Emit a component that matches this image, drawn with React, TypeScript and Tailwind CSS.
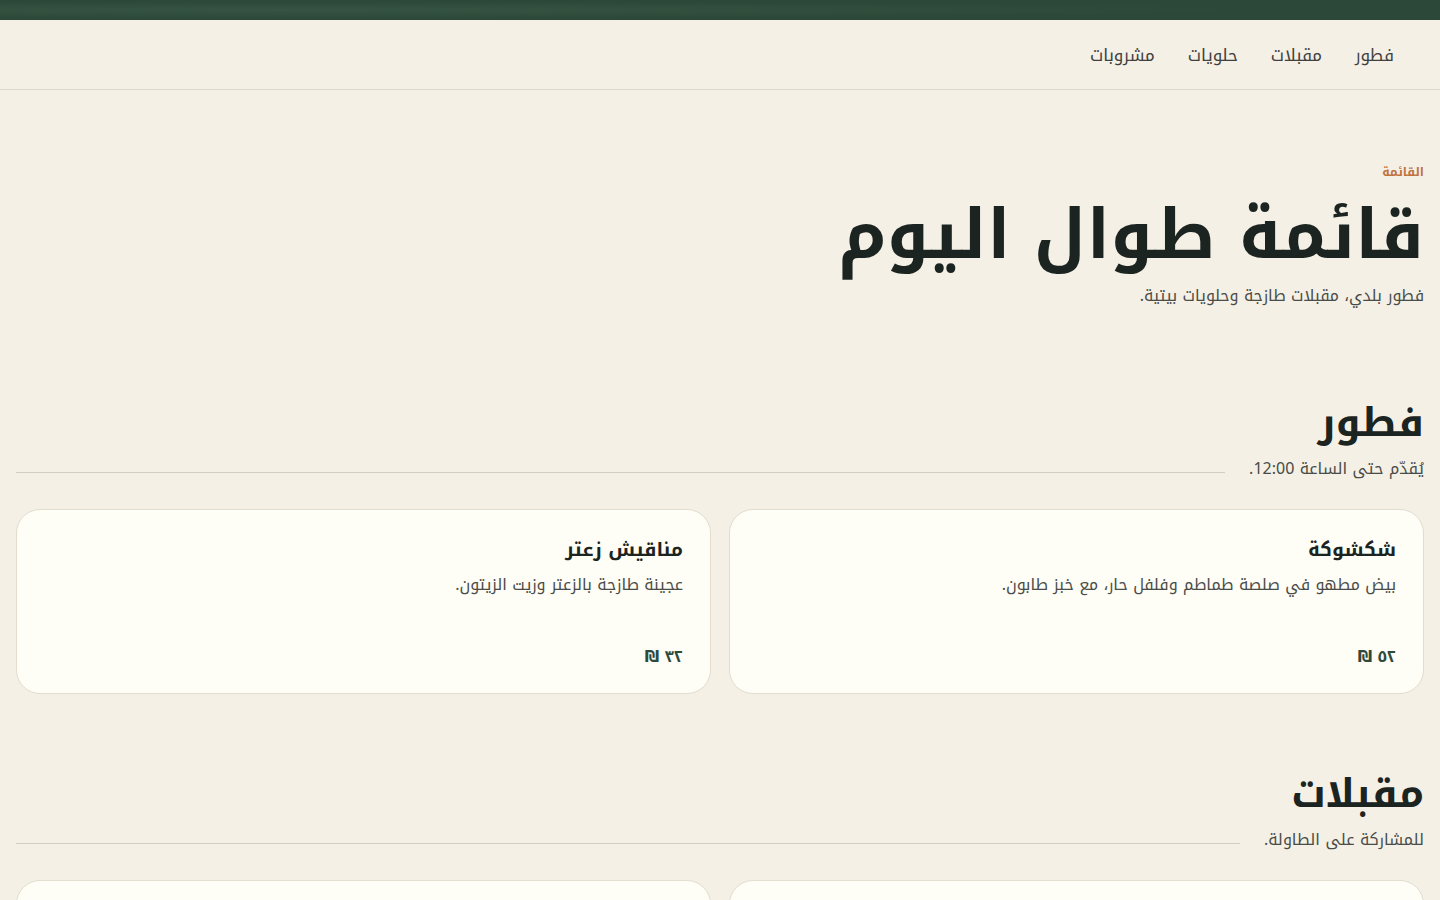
import React from "react";

const FONT = '"Noto Kufi Arabic", "Noto Sans Arabic", "DejaVu Sans", sans-serif';

type Item = { name: string; desc: string; price: string };
type Section = { title: string; sub: string; items: Item[] };

const sections: Section[] = [
  {
    title: "فطور",
    sub: "يُقدّم حتى الساعة 12:00.",
    items: [
      { name: "شكشوكة", desc: "بيض مطهو في صلصة طماطم وفلفل حار، مع خبز طابون.", price: "٥٢ ₪" },
      { name: "مناقيش زعتر", desc: "عجينة طازجة بالزعتر وزيت الزيتون.", price: "٣٢ ₪" },
    ],
  },
  {
    title: "مقبلات",
    sub: "للمشاركة على الطاولة.",
    items: [
      { name: "حمص", desc: "حمص ناعم مع طحينة وزيت زيتون.", price: "٢٨ ₪" },
      { name: "متبل", desc: "باذنجان مشوي مع طحينة وليمون.", price: "٣٠ ₪" },
    ],
  },
];

function Card({ item }: { item: Item }) {
  return (
    <div className="flex h-[185px] flex-col rounded-[24px] border border-[#e3ddcf] bg-[#fefdf6] px-[27px] pt-[25px] pb-[24px]">
      <h3 className="text-[19px] font-bold leading-[30px] text-[#1b2420]">{item.name}</h3>
      <p className="mt-[6px] text-[16px] leading-[28px] text-[#4a4c48]">{item.desc}</p>
      <div className="mt-auto text-[16px] font-bold leading-[24px] text-[#2e4a3b]">{item.price}</div>
    </div>
  );
}

export default function App() {
  return (
    <div dir="rtl" className="min-h-screen bg-[#f4f0e6]" style={{ fontFamily: FONT }}>
      <div className="h-5 bg-[#2c4838] bg-[radial-gradient(ellipse_at_20%_50%,#365443_0%,#2c4838_60%)]" />
      <header className="flex h-[70px] items-center border-b border-[#ddd7ca] pr-[46px]">
        <nav className="flex gap-[33px] pt-[2px] text-[17px] text-[#3f4140]">
          <a>فطور</a>
          <a>مقبلات</a>
          <a>حلويات</a>
          <a>مشروبات</a>
        </nav>
      </header>
      <main className="px-4">
        <section className="pt-[74px]">
          <div className="text-[12px] font-bold leading-[16px] text-[#c0733f]">القائمة</div>
          <h1 className="mt-[11px] text-[68px] font-bold leading-[90px] text-[#1b2420]">قائمة طوال اليوم</h1>
          <p className="mt-[3px] text-[16px] leading-[24px] text-[#4a4c48]">فطور بلدي، مقبلات طازجة وحلويات بيتية.</p>
        </section>
        {sections.map((s, i) => (
          <section key={i} className={i === 0 ? "mt-[85px]" : "mt-[70px]"}>
            <h2 className="text-[40px] font-bold leading-[60px] text-[#1b2420]">{s.title}</h2>
            <div className="mt-[2px] flex items-center gap-6">
              <span className="text-[16px] leading-[28px] text-[#4a4c48]">{s.sub}</span>
              <div className="mt-[6px] h-px flex-1 bg-[#d3cdbf]" />
            </div>
            <div className="mt-[26px] grid grid-cols-2 gap-[18px]">
              {s.items.map((it, j) => (
                <Card key={j} item={it} />
              ))}
            </div>
          </section>
        ))}
        <div className="h-16" />
      </main>
    </div>
  );
}
